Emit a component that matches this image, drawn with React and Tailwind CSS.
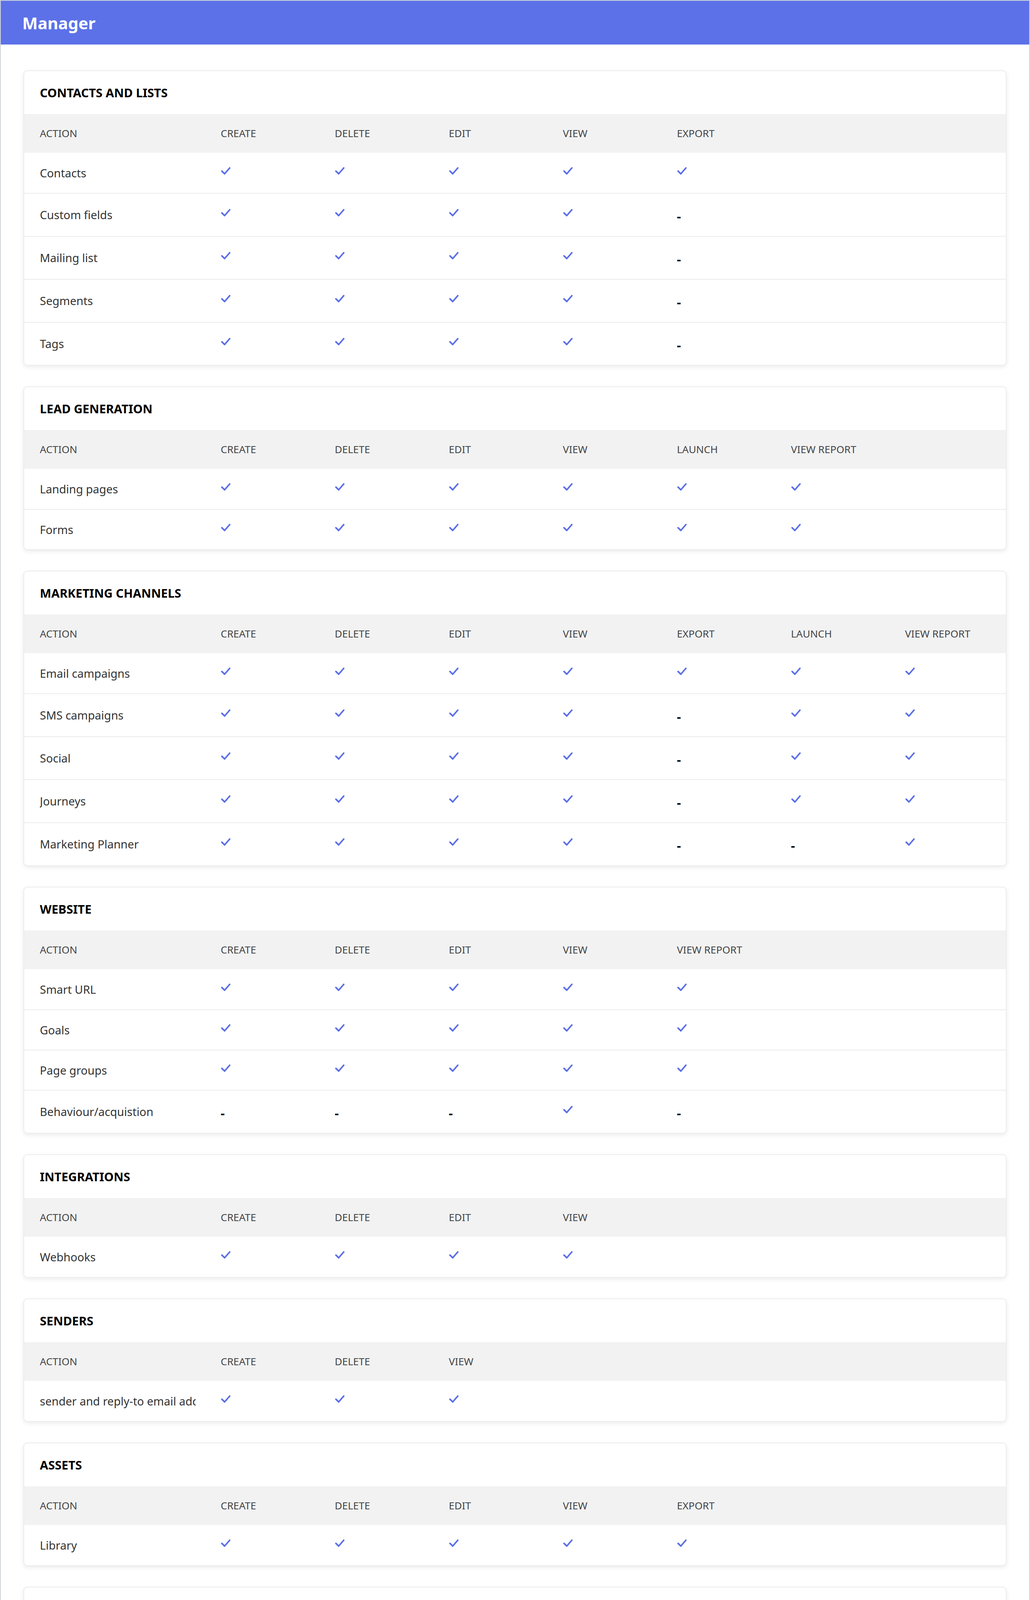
const Y = true
const N = false

const sections = [
  { title: 'CONTACTS AND LISTS', cols: ['CREATE', 'DELETE', 'EDIT', 'VIEW', 'EXPORT'], rows: [
    ['Contacts', [Y, Y, Y, Y, Y]],
    ['Custom fields', [Y, Y, Y, Y, N]],
    ['Mailing list', [Y, Y, Y, Y, N]],
    ['Segments', [Y, Y, Y, Y, N]],
    ['Tags', [Y, Y, Y, Y, N]],
  ] },
  { title: 'LEAD GENERATION', cols: ['CREATE', 'DELETE', 'EDIT', 'VIEW', 'LAUNCH', 'VIEW REPORT'], rows: [
    ['Landing pages', [Y, Y, Y, Y, Y, Y]],
    ['Forms', [Y, Y, Y, Y, Y, Y]],
  ] },
  { title: 'MARKETING CHANNELS', cols: ['CREATE', 'DELETE', 'EDIT', 'VIEW', 'EXPORT', 'LAUNCH', 'VIEW REPORT'], rows: [
    ['Email campaigns', [Y, Y, Y, Y, Y, Y, Y]],
    ['SMS campaigns', [Y, Y, Y, Y, N, Y, Y]],
    ['Social', [Y, Y, Y, Y, N, Y, Y]],
    ['Journeys', [Y, Y, Y, Y, N, Y, Y]],
    ['Marketing Planner', [Y, Y, Y, Y, N, N, Y]],
  ] },
  { title: 'WEBSITE', cols: ['CREATE', 'DELETE', 'EDIT', 'VIEW', 'VIEW REPORT'], rows: [
    ['Smart URL', [Y, Y, Y, Y, Y]],
    ['Goals', [Y, Y, Y, Y, Y]],
    ['Page groups', [Y, Y, Y, Y, Y]],
    ['Behaviour/acquistion', [N, N, N, Y, N]],
  ] },
  { title: 'INTEGRATIONS', cols: ['CREATE', 'DELETE', 'EDIT', 'VIEW'], rows: [
    ['Webhooks', [Y, Y, Y, Y]],
  ] },
  { title: 'SENDERS', cols: ['CREATE', 'DELETE', 'VIEW'], rows: [
    ['sender and reply-to email address', [Y, Y, Y]],
  ] },
  { title: 'ASSETS', cols: ['CREATE', 'DELETE', 'EDIT', 'VIEW', 'EXPORT'], rows: [
    ['Library', [Y, Y, Y, Y, Y]],
  ] },
  { title: 'USERS AND CONTROLS', cols: ['CREATE', 'EDIT'], rows: [
    ['Workspace', [N, Y]],
  ], tall: true },
]

function Check() {
  return (
    <svg width="26" height="20" viewBox="0 0 26 20" className="mb-[10px]">
      <path d="M3 10l7 7L23 2" fill="none" stroke="#5b6fe6" strokeWidth="4" strokeLinecap="round" strokeLinejoin="round" />
    </svg>
  )
}

function Section({ s }) {
  return (
    <div className="rounded-[10px] border-2 border-[#ececec] bg-white shadow-[0_4px_12px_rgba(0,0,0,0.08)] overflow-hidden">
      <div className="h-[110px] flex items-center px-[40px] text-[31px] font-bold text-black">{s.title}</div>
      <div className="h-[99px] flex items-center px-[40px] bg-[#f2f2f2] text-[26px] text-[#444]">
        <div className="w-[463px] shrink-0">ACTION</div>
        {s.cols.map((c) => <div key={c} className="w-[292px] shrink-0">{c}</div>)}
      </div>
      {s.rows.map(([label, vals], i) => {
        const hasDash = vals.includes(N)
        return (
          <div key={label} className={(i > 0 ? 'border-t-2 border-[#ececec] ' : '') + (s.tall ? 'h-[124px] ' : hasDash ? 'h-[110px] ' : 'h-[103px] ') + 'flex items-center px-[40px] text-[29px] text-[#333]'}>
            <div className="w-[463px] shrink-0">
              <div className="w-[399px] overflow-hidden whitespace-nowrap">{label}</div>
            </div>
            {vals.map((v, j) => (
              <div key={j} className="w-[292px] shrink-0 flex items-center">
                {v ? <Check /> : <span className="text-[32px] font-bold text-black pt-[8px]">-</span>}
              </div>
            ))}
          </div>
        )
      })}
    </div>
  )
}

export default function App() {
  return (
    <div className="w-[2637px] min-h-[4484px] border-2 border-[#cfd3d8] bg-white font-[family-name:Lato,_'Liberation_Sans',_sans-serif]">
      <div className="h-[112px] bg-[#5c71e8] flex items-center px-[55px] text-white text-[42px] font-bold">Manager</div>
      <div className="px-[58px] pt-[66px] pb-[50px] flex flex-col gap-[53px]">
        {sections.map((s) => <Section key={s.title} s={s} />)}
      </div>
    </div>
  )
}
